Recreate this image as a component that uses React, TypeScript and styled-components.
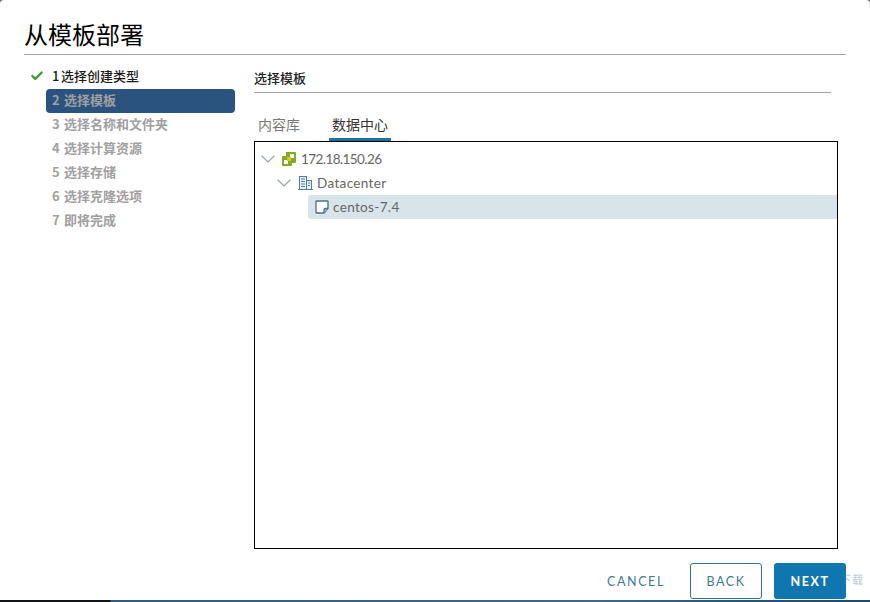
import { createGlobalStyle, styled } from "styled-components";
import { Check, ChevronDown } from "lucide-react";

const GlobalStyle = createGlobalStyle`
  html, body {
    margin: 0;
    padding: 0;
    background: #666;
  }
  body {
    font-family: Lato, "Noto Sans CJK SC", sans-serif;
  }
`;

const Page = styled.div`
  position: relative;
  width: 870px;
  height: 602px;
  overflow: hidden;
`;

const Dialog = styled.div`
  width: 870px;
  height: 600px;
  box-sizing: border-box;
  display: flex;
  flex-direction: column;
  padding: 0 24px;
  background: #fff;
  border-radius: 4px 4px 0 0;
`;

const TaskStrip = styled.div`
  height: 2px;
  background: linear-gradient(
    90deg,
    #10151c 0,
    #10151c 110px,
    #2f5d80 111px,
    #3d6a8a 600px,
    #27587e 720px,
    #1c4a70 100%
  );
`;

const Title = styled.h1`
  margin: 0;
  height: 55px;
  box-sizing: border-box;
  padding-top: 17px;
  font-family: "Noto Sans CJK SC", sans-serif;
  font-size: 24px;
  line-height: 34px;
  font-weight: 400;
  color: #000;
  border-bottom: 1px solid #a6a6a6;
`;

const Body = styled.div`
  flex: 1;
  min-height: 0;
  display: flex;
  gap: 19px;
`;

const StepList = styled.ol`
  list-style: none;
  margin: 0;
  padding: 10px 0 0 22px;
  width: 189px;
  flex: none;
`;

const Step = styled.li<{ $state: "done" | "current" | "todo" }>`
  position: relative;
  height: 24px;
  box-sizing: border-box;
  padding: 0 0 4px 6px;
  display: flex;
  align-items: center;
  border-radius: 4px;
  font-family: "Noto Sans CJK SC", sans-serif;
  font-size: 13px;
  font-weight: ${({ $state }) => ($state === "done" ? 500 : 700)};
  color: ${({ $state }) => ($state === "done" ? "#1a1a1a" : "#a0a0a0")};
  background: ${({ $state }) => ($state === "current" ? "#2b5380" : "transparent")};
`;

const StepNumber = styled.span<{ $done?: boolean }>`
  width: ${({ $done }) => ($done ? "9px" : "12px")};
  flex: none;
`;

const DoneMark = styled.span`
  position: absolute;
  left: -16px;
  top: 4px;
  display: flex;
  color: #3f9a35;
`;

const Main = styled.div`
  flex: 1;
  min-width: 0;
  display: flex;
  flex-direction: column;
  padding-top: 11px;
`;

const SectionTitle = styled.h2`
  margin: 0 15px 0 0;
  height: 27px;
  box-sizing: border-box;
  font-family: "Noto Sans CJK SC", sans-serif;
  font-size: 13px;
  line-height: 24px;
  font-weight: 500;
  color: #222;
  border-bottom: 1px solid #a6a6a6;
`;

const Tabs = styled.div`
  display: flex;
  gap: 29px;
  padding: 20px 0 0 4px;
  height: 48px;
  box-sizing: border-box;
`;

const Tab = styled.div<{ $active?: boolean }>`
  width: ${({ $active }) => ($active ? "62px" : "42px")};
  height: 28px;
  box-sizing: border-box;
  text-align: center;
  font-family: "Noto Sans CJK SC", sans-serif;
  font-size: 14px;
  line-height: 22px;
  color: ${({ $active }) => ($active ? "#333" : "#777")};
  border-bottom: 3px solid ${({ $active }) => ($active ? "#1f6f9f" : "transparent")};
`;

const TreeBox = styled.div`
  width: 584px;
  height: 408px;
  box-sizing: border-box;
  border: 1px solid #000;
  padding-top: 5px;
`;

const Row = styled.div<{ $depth: number }>`
  height: 24px;
  display: flex;
  align-items: center;
  padding-left: ${({ $depth }) => 5 + $depth * 16}px;
  font-size: 13.5px;
  letter-spacing: 0.35px;
  color: #666;
`;

const Toggle = styled.span`
  width: 16px;
  flex: none;
  display: flex;
  justify-content: center;
  color: #9aa7ae;

  svg {
    flex: none;
  }
`;

const Indent = styled.span`
  width: 32px;
  flex: none;
`;

const Label = styled.span<{ $selected?: boolean }>`
  display: flex;
  align-items: center;
  gap: ${({ $selected }) => ($selected ? "3px" : "4px")};
  height: 24px;
  box-sizing: border-box;
  padding-bottom: 1px;
  flex: ${({ $selected }) => ($selected ? 1 : "none")};
  padding-left: ${({ $selected }) => ($selected ? "6px" : "5px")};
  border-radius: 3px 0 0 3px;
  background: ${({ $selected }) => ($selected ? "#d9e4ea" : "transparent")};
`;

const Address = styled.span`
  letter-spacing: -0.57px;
`;

const Footer = styled.div`
  display: flex;
  justify-content: flex-end;
  gap: 12px;
  height: 36px;
  margin-top: 14px;
`;

const Button = styled.div<{ $variant: "link" | "outline" | "solid" }>`
  width: ${({ $variant }) => ($variant === "link" ? "84px" : "72px")};
  height: 36px;
  box-sizing: border-box;
  display: flex;
  align-items: center;
  justify-content: center;
  border-radius: 3px;
  font-size: 12.5px;
  font-weight: ${({ $variant }) => ($variant === "solid" ? 700 : 400)};
  letter-spacing: 1.6px;
  color: ${({ $variant }) => ($variant === "solid" ? "#fff" : "#3a7a99")};
  background: ${({ $variant }) => ($variant === "solid" ? "#0f76b0" : "#fff")};
  border: 1px solid ${({ $variant }) => ($variant === "outline" ? "#2d7396" : "transparent")};
`;

const Watermark = styled.span`
  position: absolute;
  right: 6px;
  bottom: 15px;
  font-family: "Noto Sans CJK SC", sans-serif;
  font-size: 11px;
  font-weight: 700;
  letter-spacing: 1px;
  color: rgba(90, 130, 160, 0.35);
`;

const VCenterIcon = () => (
  <svg width="16" height="16" viewBox="0 0 16 16" fill="none">
    <path d="M5 1h9a1 1 0 0 1 1 1v9a1 1 0 0 1-1 1h-3v2a1 1 0 0 1-1 1H2a1 1 0 0 1-1-1V6a1 1 0 0 1 1-1h3z" fill="#7cae1e" />
    <rect x="9" y="3" width="4" height="4" fill="#fff" />
    <rect x="3" y="9" width="4" height="4" fill="#fff" />
    <rect x="6" y="6" width="4" height="4" fill="#f2b632" />
  </svg>
);

const DatacenterIcon = () => (
  <svg width="16" height="16" viewBox="0 0 16 16" fill="none" stroke="#4f7f9e">
    <rect x="2.5" y="1.5" width="7" height="13" fill="#e8f0f5" />
    <rect x="9.5" y="5.5" width="5" height="9" fill="#e8f0f5" />
    <path d="M4 4h4M4 6.5h4M4 9h4M4 11.5h4M11 8h2M11 10.5h2" />
    <path d="M1 14.5h15" />
  </svg>
);

const TemplateIcon = () => (
  <svg width="16" height="16" viewBox="0 0 16 16" fill="none" stroke="#4a7186">
    <path d="M2 2.5a.5.5 0 0 1 .5-.5h11a.5.5 0 0 1 .5.5v7L10 14H2.5a.5.5 0 0 1-.5-.5z" fill="#fff" strokeWidth="1.3" />
    <path d="M14 9.5h-2.5a1.5 1.5 0 0 0-1.5 1.5v3" fill="#a9bfcc" strokeWidth="1.3" />
  </svg>
);

const steps = ["选择创建类型", "选择模板", "选择名称和文件夹", "选择计算资源", "选择存储", "选择克隆选项", "即将完成"];

export default function App() {
  return (
    <Page>
      <GlobalStyle />
      <Dialog>
        <Title>从模板部署</Title>
        <Body>
          <StepList>
            {steps.map((name, i) => (
              <Step key={name} $state={i === 0 ? "done" : i === 1 ? "current" : "todo"}>
                {i === 0 && (
                  <DoneMark>
                    <Check size={14} strokeWidth={4} />
                  </DoneMark>
                )}
                <StepNumber $done={i === 0}>{i + 1}</StepNumber>
                {name}
              </Step>
            ))}
          </StepList>
          <Main>
            <SectionTitle>选择模板</SectionTitle>
            <Tabs>
              <Tab>内容库</Tab>
              <Tab $active>数据中心</Tab>
            </Tabs>
            <TreeBox>
              <Row $depth={0}>
                <Toggle>
                  <ChevronDown size={24} strokeWidth={1.3} />
                </Toggle>
                <Label>
                  <VCenterIcon />
                  <Address>172.18.150.26</Address>
                </Label>
              </Row>
              <Row $depth={1}>
                <Toggle>
                  <ChevronDown size={24} strokeWidth={1.3} />
                </Toggle>
                <Label>
                  <DatacenterIcon />
                  Datacenter
                </Label>
              </Row>
              <Row $depth={1}>
                <Indent />
                <Label $selected>
                  <TemplateIcon />
                  centos-7.4
                </Label>
              </Row>
            </TreeBox>
            <Footer>
              <Button $variant="link">CANCEL</Button>
              <Button $variant="outline">BACK</Button>
              <Button $variant="solid">NEXT</Button>
            </Footer>
          </Main>
        </Body>
      </Dialog>
      <TaskStrip />
      <Watermark>下载</Watermark>
    </Page>
  );
}
